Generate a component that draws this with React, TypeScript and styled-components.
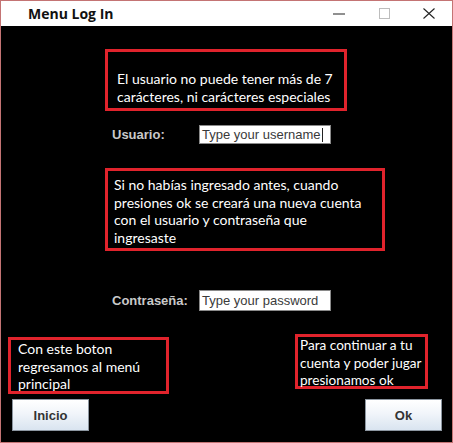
import React from "react";
import styled, { createGlobalStyle } from "styled-components";

const Global = createGlobalStyle`
  html, body { margin: 0; padding: 0; background: #ffffff; }
  * { box-sizing: border-box; }
`;

const Window = styled.div`
  width: 453px;
  height: 443px;
  border: 1px solid #c47474;
  display: flex;
  flex-direction: column;
  background: #000;
  overflow: hidden;
`;

const TitleBar = styled.div`
  height: 25px;
  background: #fff;
  display: flex;
  align-items: center;
  padding-left: 27px;
`;

const Title = styled.div`
  font-family: "Open Sans", "Liberation Sans", sans-serif;
  font-weight: 700;
  font-size: 14px;
  color: #111;
  flex: 1;
`;

const Controls = styled.div`
  display: flex;
  align-items: center;
  height: 100%;
`;

const CtrlBtn = styled.div<{ $w: number }>`
  width: ${(p) => p.$w}px;
  height: 100%;
  display: flex;
  align-items: center;
  justify-content: center;
`;

const Content = styled.div`
  flex: 1;
  display: flex;
  flex-direction: column;
  background: #000;
`;

const Note = styled.div<{ $w: number; $h: number }>`
  width: ${(p) => p.$w}px;
  height: ${(p) => p.$h}px;
  border: 3px solid #e0232c;
  color: #fff;
  font-family: Lato, "Noto Sans", sans-serif;
  font-size: 14px;
  line-height: 17.5px;
  white-space: nowrap;
`;

const TopNote = styled(Note)`
  margin: 23px 0 0 104px;
  padding: 18px 0 0 9px;
`;

const MidNote = styled(Note)`
  margin: 24px 0 0 104px;
  padding: 5px 0 0 6px;
`;

const CornerNote = styled(Note)`
  padding: 0 0 0 7px;
`;

const RightNote = styled(Note)`
  padding: 0 0 0 2px;
  font-size: 13.6px;
`;

const FieldRow = styled.div<{ $top: number }>`
  display: flex;
  align-items: center;
  margin: ${(p) => p.$top}px 0 0 111px;
`;

const Label = styled.div`
  width: 87px;
  font-family: "Liberation Sans", Arial, sans-serif;
  font-weight: 700;
  font-size: 13px;
  color: #c9c9c9;
`;

const Input = styled.div<{ $h: number }>`
  width: 132px;
  height: ${(p) => p.$h}px;
  background: #fff;
  border: 1px solid #8a8a8a;
  font-family: "Liberation Sans", Arial, sans-serif;
  font-size: 13px;
  color: #3a3a3a;
  display: flex;
  align-items: center;
  padding-left: 2px;
  white-space: nowrap;
  overflow: hidden;
`;

const Caret = styled.span`
  display: inline-block;
  width: 1px;
  height: 14px;
  background: #222;
  margin-left: 1px;
`;

const Bottom = styled.div`
  display: grid;
  grid-template-columns: 1fr 1fr;
  margin-top: 23px;
`;

const LeftCol = styled.div`
  display: flex;
  flex-direction: column;
  align-items: flex-start;
  padding-left: 7px;
  padding-top: 3px;
`;

const RightCol = styled.div`
  display: flex;
  flex-direction: column;
  align-items: flex-end;
  padding-right: 10px;
`;

const Button = styled.div`
  width: 77px;
  height: 32px;
  border: 1px solid #8c96a0;
  background: linear-gradient(#ffffff 0%, #f1f5fa 45%, #d9e4f0 100%);
  font-family: "Liberation Sans", Arial, sans-serif;
  font-weight: 700;
  font-size: 13px;
  color: #333;
  display: flex;
  align-items: center;
  justify-content: center;
`;

const LeftButton = styled(Button)`
  margin: 5px 0 0 4px;
`;

const RightButton = styled(Button)`
  margin-top: 10px;
`;

const RightNoteWrap = styled.div`
  margin-right: 14px;
`;

export default function App() {
  return (
    <>
      <Global />
      <Window>
        <TitleBar>
          <Title>Menu Log In</Title>
          <Controls>
            <CtrlBtn $w={46}>
              <svg width="12" height="2" viewBox="0 0 12 2">
                <rect x="0" y="0.5" width="12" height="1" fill="#222" />
              </svg>
            </CtrlBtn>
            <CtrlBtn $w={44}>
              <svg width="11" height="11" viewBox="0 0 11 11">
                <rect x="0.5" y="0.5" width="10" height="10" fill="none" stroke="#bdbdbd" />
              </svg>
            </CtrlBtn>
            <CtrlBtn $w={46}>
              <svg width="12" height="11" viewBox="0 0 12 11">
                <path d="M0.5 0.5 L11.5 10.5 M11.5 0.5 L0.5 10.5" stroke="#222" strokeWidth="1.1" />
              </svg>
            </CtrlBtn>
          </Controls>
        </TitleBar>
        <Content>
          <TopNote $w={242} $h={62}>
            El usuario no puede tener más de 7<br />
            carácteres, ni carácteres especiales
          </TopNote>
          <FieldRow $top={14}>
            <Label>Usuario:</Label>
            <Input $h={19}>
              Type your username<Caret />
            </Input>
          </FieldRow>
          <MidNote $w={280} $h={83}>
            Si no habías ingresado antes, cuando
            <br />
            presiones ok se creará una nueva cuenta
            <br />
            con el usuario y contraseña que
            <br />
            ingresaste
          </MidNote>
          <FieldRow $top={39}>
            <Label>Contraseña:</Label>
            <Input $h={21}>Type your password</Input>
          </FieldRow>
          <Bottom>
            <LeftCol>
              <CornerNote $w={161} $h={57}>
                Con este boton
                <br />
                regresamos al menú
                <br />
                principal
              </CornerNote>
              <LeftButton>Inicio</LeftButton>
            </LeftCol>
            <RightCol>
              <RightNoteWrap>
                <RightNote $w={133} $h={55}>
                  Para continuar a tu
                  <br />
                  cuenta y poder jugar
                  <br />
                  presionamos ok
                </RightNote>
              </RightNoteWrap>
              <RightButton>Ok</RightButton>
            </RightCol>
          </Bottom>
        </Content>
      </Window>
    </>
  );
}
